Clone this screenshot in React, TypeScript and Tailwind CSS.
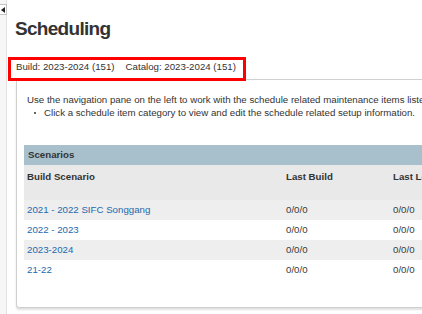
import React from "react";

const rows = [
  { name: "2021 - 2022 SIFC Songgang", a: "0/0/0", b: "0/0/0", shade: true },
  { name: "2022 - 2023", a: "0/0/0", b: "0/0/0", shade: false },
  { name: "2023-2024", a: "0/0/0", b: "0/0/0", shade: true },
  { name: "21-22", a: "0/0/0", b: "0/0/0", shade: false },
];

export default function App() {
  return (
    <div
      className="flex h-[314px] w-[422px] overflow-hidden bg-white text-[#333]"
      style={{ fontFamily: '"Liberation Sans", Arial, sans-serif' }}
    >
      {/* left collapse strip */}
      <div className="flex w-[7px] shrink-0 flex-col border-r border-[#e2e2e2] bg-[#f6f6f6]">
        <div className="mt-[4px] flex h-[11px] w-[7px] items-center justify-center border border-l-0 border-[#c4c4c4] bg-white">
          <svg width="4" height="6" viewBox="0 0 4 6">
            <polygon points="4,0 4,6 0,3" fill="#222" />
          </svg>
        </div>
      </div>

      {/* main */}
      <div className="flex min-w-0 flex-1 flex-col overflow-hidden">
        <h1 className="ml-[8px] mt-[19px] text-[19px] font-bold leading-[19px] tracking-[-0.7px] text-[#333]">
          Scheduling
        </h1>

        {/* tabs row */}
        <div className="mt-[19px] flex h-[24px] items-stretch">
          <div className="ml-[1px] flex h-[24px] w-[238px] shrink-0 items-start gap-[11px] border-[3px] border-[#ff0000] pl-[5px] text-[9.7px] leading-[14px] text-[#333]">
            <span>Build: 2023-2024 (151)</span>
            <span>Catalog: 2023-2024 (151)</span>
          </div>
          <div className="mb-[1px] flex-1 border-b border-[#d0d0d0]" />
        </div>

        {/* panel */}
        <div className="ml-[9px] w-[440px] shrink-0 rounded-bl-[3px] border-b border-l border-[#cfcfcf] pb-[27px] pl-[7px] pt-[12px] shadow-[0_2px_2px_rgba(0,0,0,0.12)]">
          <div className="pl-[3px] text-[9.7px] leading-[13px] text-[#333]">
            <p className="whitespace-nowrap">
              Use the navigation pane on the left to work with the schedule related maintenance items listed
            </p>
            <div className="flex items-center whitespace-nowrap">
              <span className="ml-[7px] mr-[8px] inline-block h-[2px] w-[2px] rounded-full bg-[#333]" />
              <span>Click a schedule item category to view and edit the schedule related setup information.</span>
            </div>
          </div>

          {/* table */}
          <div className="mt-[26px] text-[9.7px]">
            <div className="flex h-[20px] items-center bg-[#a7c0cc] pl-[4px] font-bold text-[#333]">
              Scenarios
            </div>
            <div className="grid h-[35px] grid-cols-[259px_107px_107px] bg-[#e9e9e9] pt-[5px] font-bold leading-[13px] text-[#333]">
              <div className="pl-[3px]">Build Scenario</div>
              <div className="pl-[3px]">Last Build</div>
              <div className="pl-[3px]">Last Load</div>
            </div>
            {rows.map((r) => (
              <div
                key={r.name}
                className={`grid h-[20px] grid-cols-[259px_107px_107px] items-center ${
                  r.shade ? "bg-[#eeeeee]" : "bg-white"
                }`}
              >
                <div className="pl-[3px] text-[#2468ad]">{r.name}</div>
                <div className="pl-[3px] text-[#3b3b3b]">{r.a}</div>
                <div className="pl-[3px] text-[#3b3b3b]">{r.b}</div>
              </div>
            ))}
          </div>
        </div>
      </div>
    </div>
  );
}
